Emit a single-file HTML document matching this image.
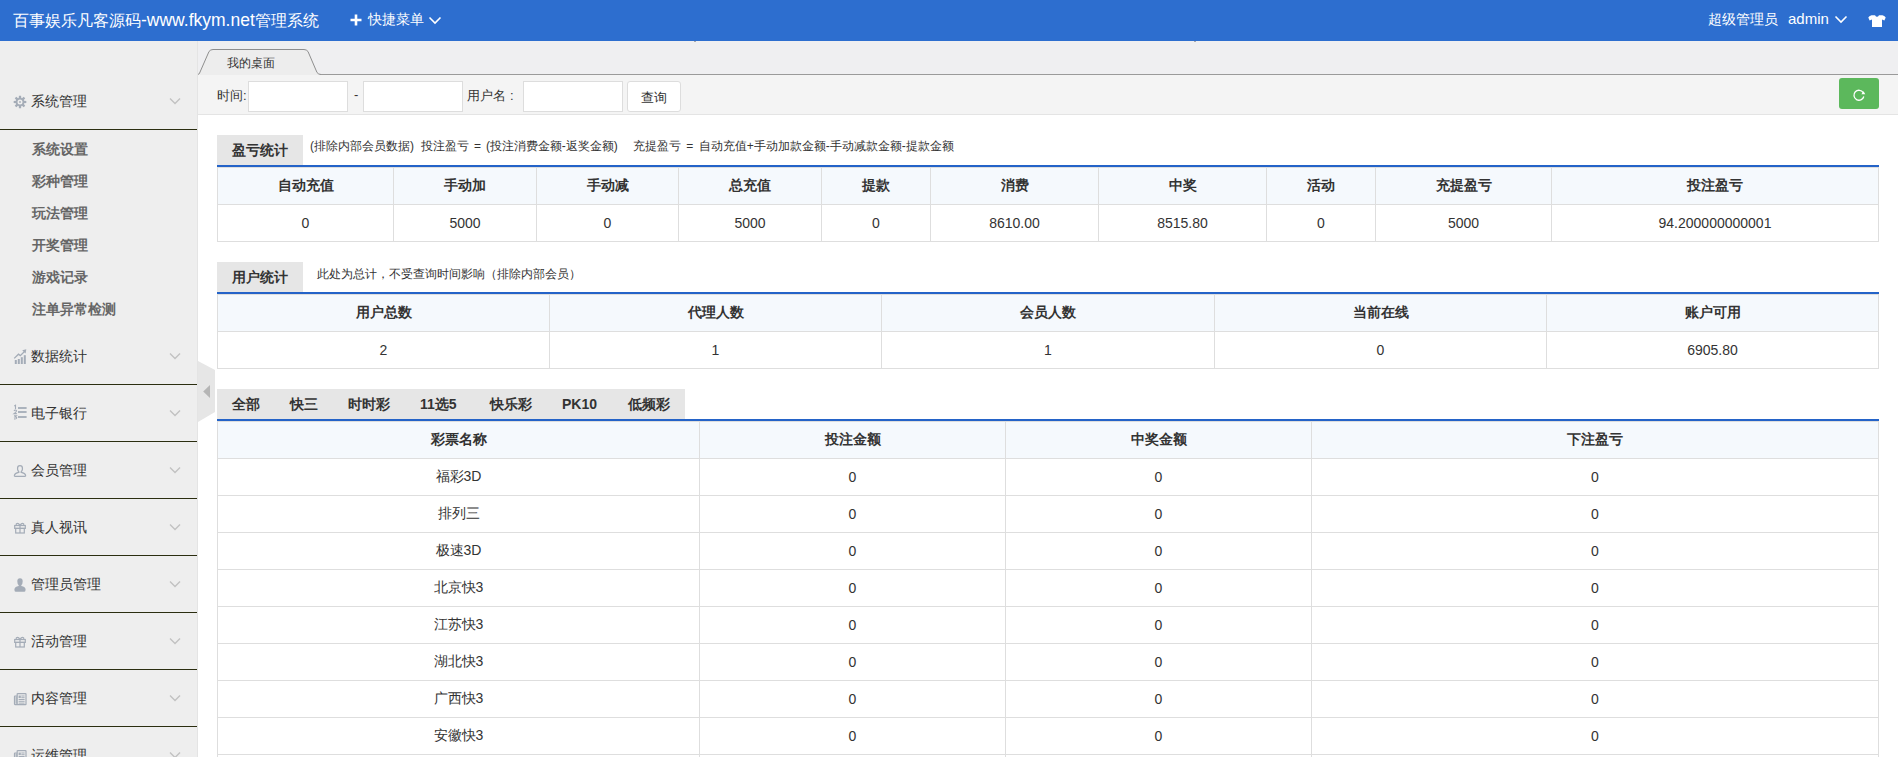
<!DOCTYPE html>
<html><head><meta charset="utf-8">
<style>
*{margin:0;padding:0;box-sizing:border-box}
html,body{width:1898px;height:757px;overflow:hidden;background:#fff;font-family:"Liberation Sans",sans-serif;color:#333}
.abs{position:absolute}
#hdr{position:absolute;left:0;top:0;width:1898px;height:41px;background:#2d6ecf;color:#fff}
#side{position:absolute;left:0;top:41px;width:198px;height:716px;background:#eeeeee;border-right:1px solid #e4e4e4}
#tabbar{position:absolute;left:198px;top:41px;width:1700px;height:34px;background:#efeff1}
#search{position:absolute;left:198px;top:75px;width:1700px;height:40px;background:#f4f4f4;border-bottom:1px solid #e4e4e4}
.t{position:absolute;white-space:nowrap}
table{border-collapse:collapse;position:absolute;table-layout:fixed}
td,th{border:1px solid #dedede;text-align:center;font-size:14px;height:37px;padding:0}
th{background:#f5f9fd;font-weight:bold;color:#333}
td{color:#333}
.bl{position:absolute;height:2px;background:#2463c8}
.stab{position:absolute;background:#e6e6e6;font-size:14px;font-weight:bold;color:#333;height:30px;line-height:30px}
.mh{position:absolute;left:0;width:197px;font-size:14px;color:#333}
.ml{position:absolute;left:0;width:197px;height:1px;background:#2b2e10}
.mi{position:absolute;left:32px;font-size:14px;color:#666;font-weight:bold}
</style></head><body>
<div id="hdr">
  <div class="t" style="left:13px;top:10px;font-size:16px;">百事娱乐凡客源码<span style="font-size:17.5px">-www.fkym.net</span>管理系统</div>
  <svg class="abs" style="left:350px;top:14px" width="12" height="12" viewBox="0 0 12 12"><path d="M6 0.5 V11.5 M0.5 6 H11.5" stroke="#fff" stroke-width="2.6"/></svg>
  <div class="t" style="left:368px;top:11px;font-size:14px;">快捷菜单</div>
  <svg class="abs" style="left:428px;top:15px" width="14" height="10" viewBox="0 0 14 10"><path d="M1.5 2.5 L7 8 L12.5 2.5" fill="none" stroke="#fff" stroke-width="1.6"/></svg>
  <div class="t" style="left:1708px;top:11px;font-size:14px;">超级管理员</div>
  <div class="t" style="left:1788px;top:10px;font-size:15px;">admin</div>
  <svg class="abs" style="left:1834px;top:14px" width="14" height="10" viewBox="0 0 14 10"><path d="M1.5 2.5 L7 8 L12.5 2.5" fill="none" stroke="#fff" stroke-width="1.6"/></svg>
  <svg class="abs" style="left:1868px;top:15px" width="18" height="12" viewBox="0 0 18 12"><path fill="#fff" d="M0.3,2.6 Q1,1 3.5,0.3 L7,0.3 Q9,3.4 11,0.3 L14.5,0.3 Q17,1 17.7,2.6 L16.4,5.4 L14,4.6 L14,12 L4,12 L4,4.6 L1.6,5.4Z"/></svg>
</div>
<div id="side">
  <div class="mh t" style="top:52px;left:31px">系统管理</div>
  <svg class="abs" style="left:10px;top:51px" width="20" height="20" viewBox="-10 -10 20 20"><path fill="#a4acb7" fill-rule="evenodd" d="M-1.27,-4.11 L-1.08,-6.31 L1.08,-6.31 L1.27,-4.11 L2.01,-3.80 L3.69,-5.23 L5.23,-3.69 L3.80,-2.01 L4.11,-1.27 L6.31,-1.08 L6.31,1.08 L4.11,1.27 L3.80,2.01 L5.23,3.69 L3.69,5.23 L2.01,3.80 L1.27,4.11 L1.08,6.31 L-1.08,6.31 L-1.27,4.11 L-2.01,3.80 L-3.69,5.23 L-5.23,3.69 L-3.80,2.01 L-4.11,1.27 L-6.31,1.08 L-6.31,-1.08 L-4.11,-1.27 L-3.80,-2.01 L-5.23,-3.69 L-3.69,-5.23 L-2.01,-3.80Z M2.5,0 A2.5,2.5 0 1 0 -2.5,0 A2.5,2.5 0 1 0 2.5,0Z"/><circle r="0.9" fill="#a4acb7"/></svg>
  <svg class="abs" style="left:168px;top:55px" width="14" height="10" viewBox="0 0 14 10"><path d="M2 2.5 L7 7.5 L12 2.5" fill="none" stroke="#c2c2c2" stroke-width="1.4"/></svg>
  <div class="ml" style="top:88px"></div>
  <div class="mi t" style="top:100px">系统设置</div>
  <div class="mi t" style="top:132px">彩种管理</div>
  <div class="mi t" style="top:164px">玩法管理</div>
  <div class="mi t" style="top:196px">开奖管理</div>
  <div class="mi t" style="top:228px">游戏记录</div>
  <div class="mi t" style="top:260px">注单异常检测</div>
  <div class="mh t" style="top:307px;left:31px">数据统计</div>
  <svg class="abs" style="left:12px;top:305px" width="18" height="20" viewBox="0 0 18 20"><g fill="#a4acb7"><rect x="2.8" y="14" width="2" height="4"/><rect x="5.8" y="13" width="2" height="5"/><rect x="8.8" y="11.2" width="2" height="6.8"/><rect x="11.8" y="9.2" width="2" height="8.8"/></g><path d="M2.2 12.4 L6.5 8.2 L8.3 9.6 L13 5" fill="none" stroke="#a4acb7" stroke-width="1.3"/><path d="M10.2 4.2 L14.3 3.3 L13.6 7.4Z" fill="#a4acb7"/></svg>
  <svg class="abs" style="left:168px;top:310px" width="14" height="10" viewBox="0 0 14 10"><path d="M2 2.5 L7 7.5 L12 2.5" fill="none" stroke="#c2c2c2" stroke-width="1.4"/></svg>
  <div class="ml" style="top:343px"></div>
  <div class="mh t" style="top:364px;left:31px">电子银行</div>
  <svg class="abs" style="left:12px;top:362px" width="18" height="20" viewBox="0 0 18 20"><g fill="none" stroke="#a4acb7" stroke-width="1.1"><path d="M2.3 3 L3.5 2.2 V5.9"/><path d="M2 7.9 Q2.6 6.9 3.5 7 Q4.6 7.2 4.4 8.2 Q4.1 9.2 2.1 10.6 H4.8"/><path d="M2 12.7 H4.4 L3.1 13.9 Q4.8 13.9 4.7 15 Q4.5 16.2 2 15.9"/></g><g fill="#a4acb7"><rect x="6" y="4.1" width="8.6" height="1.8"/><rect x="6" y="8.1" width="8.6" height="1.8"/><rect x="6" y="13.1" width="8.6" height="1.8"/></g></svg>
  <svg class="abs" style="left:168px;top:367px" width="14" height="10" viewBox="0 0 14 10"><path d="M2 2.5 L7 7.5 L12 2.5" fill="none" stroke="#c2c2c2" stroke-width="1.4"/></svg>
  <div class="ml" style="top:400px"></div>
  <div class="mh t" style="top:421px;left:31px">会员管理</div>
  <svg class="abs" style="left:12px;top:420px" width="18" height="20" viewBox="0 0 18 20"><path d="M5.6 7 Q5.6 4.7 8 4.7 Q10.4 4.7 10.4 7 L10.4 8.4 Q10.2 9.9 9.2 10.7 L9.2 11.4 Q13.2 12.2 13.6 14.4 Q13.8 15.3 12.8 15.3 L3.2 15.3 Q2.2 15.3 2.4 14.4 Q2.8 12.2 6.8 11.4 L6.8 10.7 Q5.8 9.9 5.6 8.4Z" fill="none" stroke="#a4acb7" stroke-width="1.25"/></svg>
  <svg class="abs" style="left:168px;top:424px" width="14" height="10" viewBox="0 0 14 10"><path d="M2 2.5 L7 7.5 L12 2.5" fill="none" stroke="#c2c2c2" stroke-width="1.4"/></svg>
  <div class="ml" style="top:457px"></div>
  <div class="mh t" style="top:478px;left:31px">真人视讯</div>
  <svg class="abs" style="left:12px;top:477px" width="18" height="20" viewBox="0 0 18 20"><g fill="none" stroke="#a4acb7" stroke-width="1.2"><path d="M8 7.3 Q6.6 5.2 5 5.5 Q3.9 5.8 4.4 7"/><path d="M8 7.3 Q9.4 5.2 11 5.5 Q12.1 5.8 11.6 7"/><rect x="2.7" y="7.5" width="10.6" height="2.9"/><rect x="3.7" y="10.4" width="8.6" height="4.6"/><path d="M8 7.5 V15"/></g></svg>
  <svg class="abs" style="left:168px;top:481px" width="14" height="10" viewBox="0 0 14 10"><path d="M2 2.5 L7 7.5 L12 2.5" fill="none" stroke="#c2c2c2" stroke-width="1.4"/></svg>
  <div class="ml" style="top:514px"></div>
  <div class="mh t" style="top:535px;left:31px">管理员管理</div>
  <svg class="abs" style="left:12px;top:533px" width="18" height="20" viewBox="0 0 18 20"><path fill="#a4acb7" d="M5.3 7.2 Q5.3 4.2 8 4.2 Q10.7 4.2 10.7 7.2 Q10.7 10 9.3 11.3 L9.3 12 Q13.5 12.6 13.6 15.5 Q13.6 17.8 12.4 17.8 L3.6 17.8 Q2.4 17.8 2.4 15.5 Q2.5 12.6 6.7 12 L6.7 11.3 Q5.3 10 5.3 7.2Z"/></svg>
  <svg class="abs" style="left:168px;top:538px" width="14" height="10" viewBox="0 0 14 10"><path d="M2 2.5 L7 7.5 L12 2.5" fill="none" stroke="#c2c2c2" stroke-width="1.4"/></svg>
  <div class="ml" style="top:571px"></div>
  <div class="mh t" style="top:592px;left:31px">活动管理</div>
  <svg class="abs" style="left:12px;top:591px" width="18" height="20" viewBox="0 0 18 20"><g fill="none" stroke="#a4acb7" stroke-width="1.2"><path d="M8 7.3 Q6.6 5.2 5 5.5 Q3.9 5.8 4.4 7"/><path d="M8 7.3 Q9.4 5.2 11 5.5 Q12.1 5.8 11.6 7"/><rect x="2.7" y="7.5" width="10.6" height="2.9"/><rect x="3.7" y="10.4" width="8.6" height="4.6"/><path d="M8 7.5 V15"/></g></svg>
  <svg class="abs" style="left:168px;top:595px" width="14" height="10" viewBox="0 0 14 10"><path d="M2 2.5 L7 7.5 L12 2.5" fill="none" stroke="#c2c2c2" stroke-width="1.4"/></svg>
  <div class="ml" style="top:628px"></div>
  <div class="mh t" style="top:649px;left:31px">内容管理</div>
  <svg class="abs" style="left:12px;top:647px" width="18" height="20" viewBox="0 0 18 20"><g fill="none" stroke="#a4acb7" stroke-width="1.2"><path d="M5.2 5.6 H13.5 Q14 5.6 14 6.1 V16.2 Q14 16.6 13.5 16.6 H3 Q2.5 16.6 2.5 16.1 V8.5 Q2.5 8 3 8 H5.2"/><path d="M4.2 8.5 V15.8"/><path d="M5.2 5.6 V16.6"/></g><g fill="#a4acb7"><rect x="6.6" y="7.5" width="2.2" height="2.6"/><rect x="9.3" y="7.5" width="3.3" height="1"/><rect x="9.3" y="9.2" width="3.3" height="1"/><rect x="6.6" y="11" width="6" height="1"/><rect x="6.6" y="12.8" width="6" height="1"/><rect x="6.6" y="14.6" width="6" height="1"/></g></svg>
  <svg class="abs" style="left:168px;top:652px" width="14" height="10" viewBox="0 0 14 10"><path d="M2 2.5 L7 7.5 L12 2.5" fill="none" stroke="#c2c2c2" stroke-width="1.4"/></svg>
  <div class="ml" style="top:685px"></div>
  <div class="mh t" style="top:706px;left:31px">运维管理</div>
  <svg class="abs" style="left:12px;top:704px" width="18" height="20" viewBox="0 0 18 20"><g fill="none" stroke="#a4acb7" stroke-width="1.2"><path d="M5.2 5.6 H13.5 Q14 5.6 14 6.1 V16.2 Q14 16.6 13.5 16.6 H3 Q2.5 16.6 2.5 16.1 V8.5 Q2.5 8 3 8 H5.2"/><path d="M4.2 8.5 V15.8"/><path d="M5.2 5.6 V16.6"/></g><g fill="#a4acb7"><rect x="6.6" y="7.5" width="2.2" height="2.6"/><rect x="9.3" y="7.5" width="3.3" height="1"/><rect x="9.3" y="9.2" width="3.3" height="1"/><rect x="6.6" y="11" width="6" height="1"/><rect x="6.6" y="12.8" width="6" height="1"/><rect x="6.6" y="14.6" width="6" height="1"/></g></svg>
  <svg class="abs" style="left:168px;top:709px" width="14" height="10" viewBox="0 0 14 10"><path d="M2 2.5 L7 7.5 L12 2.5" fill="none" stroke="#c2c2c2" stroke-width="1.4"/></svg>
</div>
<svg class="abs" style="left:198px;top:360px" width="18" height="64" viewBox="0 0 18 64"><path d="M0 1 L17 10 L17 52 L0 62Z" fill="#e6e6e6"/><path d="M5.2 31.5 L12 25 L12 38Z" fill="#b5b5b5"/></svg>
<div id="tabbar">
  <div class="abs" style="left:120px;top:33px;width:1580px;height:1px;background:#9a9a9a"></div><svg class="abs" style="left:0;top:0" width="130" height="34" viewBox="0 0 130 34"><path d="M0 34 L0 33.5 Q1 33.3 1.6 32 L11 10.5 Q12.5 8.5 15 8.5 L106 8.5 Q108.5 8.5 110 10.5 L119 31.5 Q120.5 33.5 123 33.5 L123 34Z" fill="#ededed"/><path d="M0 33.5 Q1 33.3 1.6 32 L11 10.5 Q12.5 8.5 15 8.5 L106 8.5 Q108.5 8.5 110 10.5 L119 31.5 Q120.5 33.5 123 33.5" fill="none" stroke="#8e8e8e" stroke-width="1"/></svg>
  <div class="t" style="left:29px;top:14px;font-size:12px;color:#333">我的桌面</div>
</div>
<div id="search">
  <div class="t" style="left:19px;top:12px;font-size:13px;color:#333">时间:</div>
  <div class="abs" style="left:50px;top:6px;width:100px;height:31px;background:#fff;border:1px solid #ddd"></div>
  <div class="t" style="left:156px;top:12px;font-size:13px;color:#333">-</div>
  <div class="abs" style="left:165px;top:6px;width:100px;height:31px;background:#fff;border:1px solid #ddd"></div>
  <div class="t" style="left:269px;top:12px;font-size:13px;color:#333">用户名<span style="margin-left:4px">:</span></div>
  <div class="abs" style="left:325px;top:6px;width:100px;height:31px;background:#fff;border:1px solid #ddd"></div>
  <div class="abs" style="left:429px;top:6px;width:54px;height:31px;background:#fff;border:1px solid #ddd;border-radius:3px;font-size:13px;text-align:center;line-height:32px;color:#333">查询</div>
  <div class="abs" style="left:1641px;top:3px;width:40px;height:31px;background:#5cb85c;border-radius:3px"><svg class="abs" style="left:12px;top:9px" width="16" height="16" viewBox="0 0 16 16"><path d="M12.2 5.6 A5 5 0 1 0 12.8 9.5" fill="none" stroke="#fff" stroke-width="1.3"/><path d="M10.3 7.2 L14.3 7.2 L12.6 4.2Z" fill="#fff"/></svg></div>
</div>

<!-- profit stats -->
<div class="stab" style="left:217px;top:135px;width:86px;text-align:center">盈亏统计</div>
<div class="t" id="d1" style="left:310px;top:138px;font-size:12px;color:#333">(排除内部会员数据)</div>
<div class="t" id="d2" style="word-spacing:1.6px;left:421px;top:138px;font-size:12px;color:#333">投注盈亏 = (投注消费金额-返奖金额)</div>
<div class="t" id="d3" style="word-spacing:2px;left:633px;top:138px;font-size:12px;color:#333">充提盈亏 = 自动充值+手动加款金额-手动减款金额-提款金额</div>
<div class="bl" style="left:217px;top:165px;width:1662px"></div>
<table style="left:217px;top:167px;width:1661px">
<colgroup><col style="width:176px"><col style="width:143px"><col style="width:142px"><col style="width:143px"><col style="width:109px"><col style="width:168px"><col style="width:168px"><col style="width:109px"><col style="width:176px"><col style="width:327px"></colgroup>
<tr><th>自动充值</th><th>手动加</th><th>手动减</th><th>总充值</th><th>提款</th><th>消费</th><th>中奖</th><th>活动</th><th>充提盈亏</th><th>投注盈亏</th></tr>
<tr><td>0</td><td>5000</td><td>0</td><td>5000</td><td>0</td><td>8610.00</td><td>8515.80</td><td>0</td><td>5000</td><td>94.200000000001</td></tr>
</table>

<!-- user stats -->
<div class="stab" style="left:217px;top:262px;width:86px;text-align:center">用户统计</div>
<div class="t" style="left:317px;top:266px;font-size:12px;color:#333">此处为总计，不受查询时间影响（排除内部会员）</div>
<div class="bl" style="left:217px;top:292px;width:1662px"></div>
<table style="left:217px;top:294px;width:1661px">
<colgroup><col style="width:332px"><col style="width:332px"><col style="width:333px"><col style="width:332px"><col style="width:332px"></colgroup>
<tr><th>用户总数</th><th>代理人数</th><th>会员人数</th><th>当前在线</th><th>账户可用</th></tr>
<tr><td>2</td><td>1</td><td>1</td><td>0</td><td>6905.80</td></tr>
</table>

<!-- lottery -->
<div class="stab" style="left:217px;top:389px;width:468px"></div>
<div class="t" style="left:232px;top:396px;font-size:14px;font-weight:bold;color:#333">全部</div>
<div class="t" style="left:290px;top:396px;font-size:14px;font-weight:bold;color:#333">快三</div>
<div class="t" style="left:348px;top:396px;font-size:14px;font-weight:bold;color:#333">时时彩</div>
<div class="t" style="left:420px;top:396px;font-size:14px;font-weight:bold;color:#333">11选5</div>
<div class="t" style="left:490px;top:396px;font-size:14px;font-weight:bold;color:#333">快乐彩</div>
<div class="t" style="left:562px;top:396px;font-size:14px;font-weight:bold;color:#333">PK10</div>
<div class="t" style="left:628px;top:396px;font-size:14px;font-weight:bold;color:#333">低频彩</div>
<div class="bl" style="left:217px;top:419px;width:1662px"></div>
<table style="left:217px;top:421px;width:1661px">
<colgroup><col style="width:482px"><col style="width:306px"><col style="width:306px"><col style="width:567px"></colgroup>
<tr><th>彩票名称</th><th>投注金额</th><th>中奖金额</th><th>下注盈亏</th></tr>
<tr><td>福彩3D</td><td>0</td><td>0</td><td>0</td></tr>
<tr><td>排列三</td><td>0</td><td>0</td><td>0</td></tr>
<tr><td>极速3D</td><td>0</td><td>0</td><td>0</td></tr>
<tr><td>北京快3</td><td>0</td><td>0</td><td>0</td></tr>
<tr><td>江苏快3</td><td>0</td><td>0</td><td>0</td></tr>
<tr><td>湖北快3</td><td>0</td><td>0</td><td>0</td></tr>
<tr><td>广西快3</td><td>0</td><td>0</td><td>0</td></tr>
<tr><td>安徽快3</td><td>0</td><td>0</td><td>0</td></tr>
<tr><td>河北快3</td><td>0</td><td>0</td><td>0</td></tr>
</table>
<div class="abs" style="left:694px;top:41px;width:2px;height:1px;background:#a8a8a8"></div>
<div class="abs" style="left:1194px;top:41px;width:2px;height:1px;background:#a8a8a8"></div>
</body></html>
